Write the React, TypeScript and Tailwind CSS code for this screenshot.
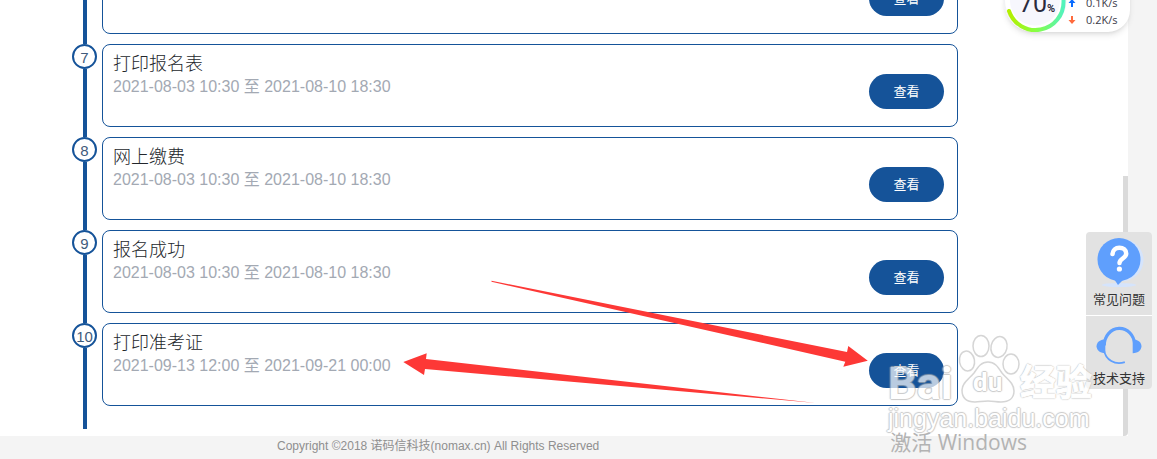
import React from "react";

interface Step {
    no: number;
    title?: string;
    time?: string;
}

const steps: Step[] = [
    { no: 6 },
    { no: 7, title: "打印报名表", time: "2021-08-03 10:30 至 2021-08-10 18:30" },
    { no: 8, title: "网上缴费", time: "2021-08-03 10:30 至 2021-08-10 18:30" },
    { no: 9, title: "报名成功", time: "2021-08-03 10:30 至 2021-08-10 18:30" },
    { no: 10, title: "打印准考证", time: "2021-09-13 12:00 至 2021-09-21 00:00" },
];

const StepItem = ({ step }: { step: Step }) => (
    <li className="group flex gap-[5px]">
        <div className="flex w-[25px] shrink-0 flex-col">
            <span className="flex h-[25px] items-center justify-center rounded-full border-2 border-[#155399] bg-white pt-[2px] text-[15px] leading-5 text-[#3f5b7c]">
                {step.no}
            </span>
            <span className="ml-[11px] w-1 flex-1 bg-[#155399]" />
        </div>
        <div className="mb-[10px] flex min-h-[83px] flex-1 items-start justify-between rounded-lg border border-[#155399] pl-[10px] pr-[13px] group-last:mb-[23px]">
            <div className="pt-[7px]">
                {step.title && <h2 className="text-[18px] font-light leading-6 text-[#23272c]">{step.title}</h2>}
                {step.time && <p className="text-[16px] leading-[22px] text-[#a3a9b3]">{step.time}</p>}
            </div>
            <button
                type="button"
                className="mt-[29px] h-[35px] w-[75px] rounded-full bg-[#155399] text-[13px] text-white"
            >
                查看
            </button>
        </div>
    </li>
);

const HelpIcon = () => (
    <svg viewBox="0 0 50 52" className="h-[52px] w-[50px]">
        <circle cx="28.500" cy="25" r="21" fill="#d5e4fc" />
        <ellipse cx="25" cy="50" rx="17" ry="2" fill="#d5e4fc" />
        <circle cx="25" cy="24.500" r="21.500" fill="#5f9ffd" />
        <path d="M20 44h10l-6 6z" fill="#5f9ffd" />
        <path d="M18.500 19c.3-4 3.200-6.200 6.800-6.200 4 0 6.900 2.200 6.900 5.700 0 5-6.700 5-6.700 9.500" fill="none" stroke="#fff" strokeWidth="4.500" strokeLinecap="round" />
        <circle cx="25.400" cy="34" r="2.600" fill="#fff" />
    </svg>
);

const HeadsetIcon = () => (
    <svg viewBox="0 0 50 42" className="h-[42px] w-[50px]">
        <path d="M10 21a15.500 17 0 0 1 31-1" fill="none" stroke="#5f9ffd" strokeWidth="3.200" />
        <path d="M9.500 25c1.500 11 11.500 16.500 21.500 13" fill="none" stroke="#5f9ffd" strokeWidth="1.800" />
        <path d="M11 14.500v14.500C5 28.800 2 25.500 2 21.800s3-7.100 9-7.300z" fill="#5f9ffd" />
        <path d="M39 14.500v14.500c6-.2 9-3.500 9-7.200s-3-7.100-9-7.300z" fill="#5f9ffd" />
    </svg>
);

const SpeedBall = () => (
    <div className="absolute -top-[28px] right-[27px] flex h-[60px] w-[126px] rounded-l-[30px] rounded-r-[22px] bg-white shadow-md">
        <div className="relative h-[60px] w-[64px]">
            <svg viewBox="0 0 64 60" className="h-[60px] w-[64px] overflow-visible">
                <defs>
                    <linearGradient id="ring" x1="0" x2="1">
                        <stop offset="0" stopColor="#b4ef00" />
                        <stop offset="0.5" stopColor="#86ff45" />
                        <stop offset="1" stopColor="#52f3bd" />
                    </linearGradient>
                </defs>
                <circle cx="31" cy="28.500" r="31.500" fill="#f2f2f5" />
                <circle cx="31" cy="28.500" r="30" fill="#fff" />
                <circle cx="31" cy="28.500" r="25" fill="#f7f7fd" />
                <path d="M5 39A28 28 0 0 0 59.500 29V20" fill="none" stroke="url(#ring)" strokeWidth="4" strokeLinecap="round" />
            </svg>
            <span className="absolute left-[15px] top-[18px] font-['Roboto'] text-[25px] leading-7 text-[#2b2b3d]">
                70<small className="text-[11px] font-bold">%</small>
            </span>
        </div>
        <ul className="flex flex-col pt-[22px] font-['Open_Sans'] text-[11px] leading-[17px] text-[#3a3a48]">
            <li className="flex items-center gap-[10px]">
                <svg viewBox="0 0 8 10" className="h-[10px] w-[8px]">
                    <path d="M4 1l3.500 4H5v4H3V5H.500z" fill="#0a6cff" />
                </svg>
                0.1K/s
            </li>
            <li className="flex items-center gap-[10px]">
                <svg viewBox="0 0 8 10" className="h-[10px] w-[8px]">
                    <path d="M4 9L.500 5H3V1h2v4h2.500z" fill="#ff6a3c" />
                </svg>
                0.2K/s
            </li>
        </ul>
    </div>
);

const SideMenu = () => (
    <nav className="absolute right-[5px] top-[232px] flex w-[66px] flex-col gap-px overflow-hidden rounded-[4px] bg-white text-[13px] leading-5 text-[#333]">
        <a href="#faq" className="flex h-[83px] flex-col items-center bg-[#e2e2e2] pt-[3px]">
            <HelpIcon />
            <span className="mt-[3px]">常见问题</span>
        </a>
        <a href="#support" className="flex h-[73px] flex-col items-center bg-[#e2e2e2] pt-[9px]">
            <HeadsetIcon />
            <span className="mt-[3px]">技术支持</span>
        </a>
    </nav>
);

const Arrows = () => (
    <svg width="480" height="140" viewBox="400 270 480 140" className="pointer-events-none absolute left-[400px] top-[270px]">
        <path d="M491.500 280.700L847 352l1.300-6 19.500 14.700-24.500 6 2-5-353.800-80z" fill="#fd3836" />
        <path d="M403.300 362l23.400-8.700-.7 5.700L816 403 425 369l-1 6z" fill="#fd3836" />
    </svg>
);

const outline = "[text-shadow:1px_0_1px_#b4b4b4,-1px_0_1px_#b4b4b4,0_1px_1px_#b4b4b4,0_-1px_1px_#b4b4b4]";

const Watermark = () => (
    <div className="pointer-events-none absolute right-[64px] top-[332px] w-[205px] whitespace-nowrap text-white opacity-70">
        <div className="flex h-[72px] items-end">
            <span className={`w-[67px] font-['Roboto'] text-[45px] font-bold leading-[40px] ${outline}`}>Bai</span>
            <div className="relative w-[65px] self-start">
                <svg viewBox="0 0 65 72" className="h-[72px] w-[65px]" fill="#fff" stroke="#c4c4c4" strokeWidth="1.500">
                    <ellipse cx="12" cy="29" rx="7.500" ry="10" transform="rotate(-10 12 29)" />
                    <ellipse cx="26" cy="14" rx="8" ry="10.500" />
                    <ellipse cx="44" cy="15" rx="8" ry="10.500" transform="rotate(12 44 15)" />
                    <ellipse cx="56" cy="32" rx="8" ry="10" />
                    <path d="M33 30c7 0 10 5 14 11 5 6 12 10 12 18 0 7-5 11-13 11-5 0-8-1-13-1s-9 1-13 1C12 70 7 66 7 58c0-7 7-11 12-17 4-6 7-11 14-11z" />
                </svg>
                <span className={`absolute left-[18px] top-[35px] font-['Roboto'] text-[26px] font-bold leading-[30px] ${outline}`}>du</span>
            </div>
            <span className={`text-[36px] font-bold leading-[40px] [-webkit-text-stroke:1px_#fff] ${outline}`}>经验</span>
        </div>
        <p className={`text-[25px] leading-[28px] ${outline}`}>jingyan.baidu.com</p>
    </div>
);

const App = () => {
    return (
        <div className="relative min-h-screen overflow-hidden bg-[#f4f4f4] font-['Liberation_Sans','Noto_Sans_CJK_SC',sans-serif]">
            <main className="mr-[29px] flex bg-white">
                <div className="min-w-0 flex-1 pb-[7px] pl-[72px] pr-[165px]">
                    <ol className="-mt-[49px]">
                        {steps.map((step) => (
                            <StepItem key={step.no} step={step} />
                        ))}
                    </ol>
                </div>
                {/* Scroll thumb */}
                <div className="mt-[176px] w-[5px] rounded-br-[4px] bg-[#dadada]" />
            </main>
            <footer className="pl-[277px] pt-px text-[12px] leading-[18px] text-[#8f8f8f]">
                Copyright ©2018 诺码信科技(nomax.cn) All Rights Reserved
            </footer>

            <SpeedBall />
            <Arrows />
            <SideMenu />
            <Watermark />
            <p className="pointer-events-none absolute right-[130px] top-[428px] font-['Open_Sans','Noto_Sans_CJK_SC',sans-serif] text-[21px] leading-7 text-[#b3b3b3]">
                激活 Windows
            </p>
        </div>
    );
};

export default App;
